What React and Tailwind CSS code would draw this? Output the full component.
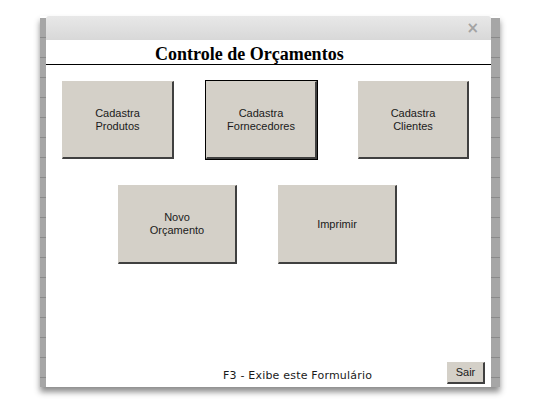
import React from "react";

const strip =
  "bg-[repeating-linear-gradient(to_bottom,#a6a6a6_0px,#a6a6a6_19px,#8a8a8a_19px,#8a8a8a_20px)]";

const Btn = ({ lines, className = "", selected = false }) => (
  <div
    className={`flex flex-col items-center justify-center bg-[#d4d0c8] text-[11px] leading-[13px] text-[#1a1a1a] border-t border-l border-t-[#d4d0c8] border-l-[#d4d0c8] border-r-2 border-b-2 border-r-[#404040] border-b-[#404040] ${
      selected ? "outline outline-1 outline-black" : ""
    } ${className}`}
    style={{ fontFamily: "Tahoma, 'Liberation Sans', Arial, sans-serif" }}
  >
    {lines.map((l) => (
      <span key={l}>{l}</span>
    ))}
  </div>
);

export default function App() {
  return (
    <div className="w-[540px] h-[400px] bg-white overflow-hidden">
      <div className="flex ml-[40px] mt-[16px] w-[460px] h-[371px] shadow-[0_5px_6px_rgba(0,0,0,0.45)]">
        {/* spreadsheet left column */}
        <div className={`w-[6px] mt-[2px] ${strip}`} />

        {/* form window */}
        <div className="w-[445px] flex flex-col bg-white">
          <div className="h-[24px] bg-gradient-to-b from-[#e8e8e8] to-[#d8d8d8] rounded-tl-[3px] rounded-tr-[3px] flex items-center justify-end pr-[12px]">
            <span
              className="text-[15px] font-bold leading-none text-[#a3a3a3]"
              style={{ fontFamily: "'DejaVu Sans', sans-serif" }}
            >
              ×
            </span>
          </div>

          <div className="h-[25px] border-b border-black flex items-center pt-[3px] pl-[109px]">
            <span
              className="text-[18px] font-bold text-black leading-none"
              style={{ fontFamily: "'Liberation Serif', 'Times New Roman', serif" }}
            >
              Controle de Orçamentos
            </span>
          </div>

          <div className="flex mt-[16px]">
            <Btn lines={["Cadastra", "Produtos"]} className="ml-[16px] w-[112px] h-[78px]" />
            <Btn lines={["Cadastra", "Fornecedores"]} className="ml-[32px] w-[111px] h-[78px]" selected />
            <Btn lines={["Cadastra", "Clientes"]} className="ml-[41px] w-[111px] h-[78px]" />
          </div>

          <div className="flex mt-[26px]">
            <Btn lines={["Novo", "Orçamento"]} className="ml-[72px] w-[119px] h-[79px]" />
            <Btn lines={["Imprimir"]} className="ml-[41px] w-[119px] h-[79px]" />
          </div>

          <div className="flex items-end mt-auto mb-[3px]">
            <span
              className="ml-[177px] mb-[1px] text-[11px] leading-[14px] text-[#1a1a1a] tracking-[0.2px]"
              style={{ fontFamily: "Verdana, 'DejaVu Sans', sans-serif" }}
            >
              F3 - Exibe este Formulário
            </span>
            <Btn lines={["Sair"]} className="ml-auto mr-[6px] w-[38px] h-[22px]" />
          </div>
        </div>

        {/* spreadsheet right column */}
        <div className={`w-[9px] mt-[2px] ${strip}`} />
      </div>
    </div>
  );
}
